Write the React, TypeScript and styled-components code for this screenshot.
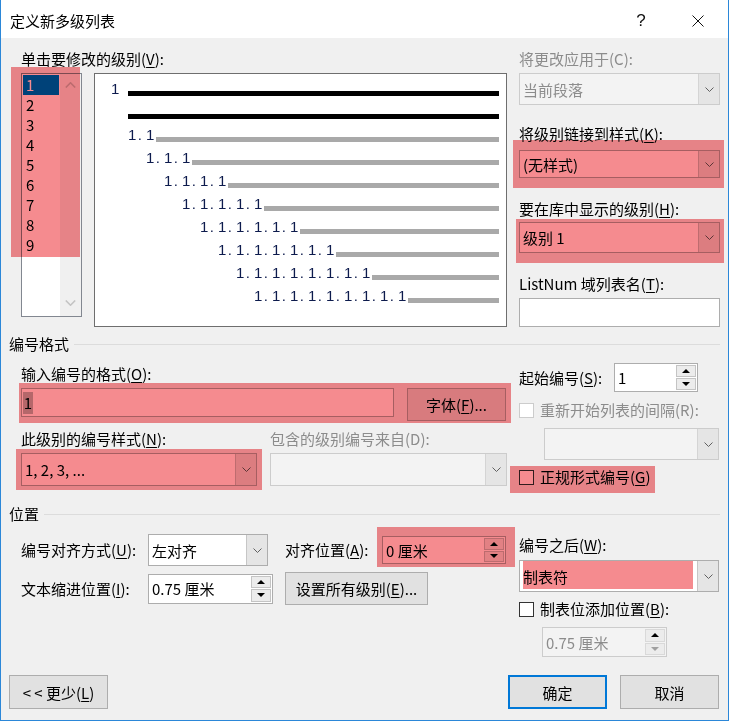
import styled, { createGlobalStyle } from 'styled-components';

const GlobalStyle = createGlobalStyle`
  html, body {
    margin: 0;
    padding: 0;
    background: #ffffff;
  }
  * {
    box-sizing: border-box;
  }
`;

const levels = [1, 2, 3, 4, 5, 6, 7, 8, 9];

// preview rows: first two are the bold level-1 lines, then one row per deeper level
const previewRows = [
  { indent: 16, depth: 1, thick: true, single: true },
  { indent: 33, depth: 0, thick: true, single: false },
  ...Array.from({ length: 8 }, (_, i) => ({
    indent: 33 + 18 * i,
    depth: i + 2,
    thick: false,
    single: false,
  })),
];

const Chevron = ({ color = '#606060' }: { color?: string }) => (
  <svg width="9" height="5" viewBox="0 0 9 5">
    <polyline points="0.5,0.5 4.5,4.5 8.5,0.5" fill="none" stroke={color} strokeWidth="1" />
  </svg>
);

const ScrollArrow = ({ up }: { up?: boolean }) => (
  <svg width="11" height="6" viewBox="0 0 11 6">
    <polyline
      points={up ? '0.8,5.5 5.5,0.8 10.2,5.5' : '0.8,0.5 5.5,5.2 10.2,0.5'}
      fill="none"
      stroke="#c4c4c4"
      strokeWidth="1.6"
    />
  </svg>
);

const Tri = ({ up, color = '#000000' }: { up?: boolean; color?: string }) => (
  <svg width="8" height="4" viewBox="0 0 8 4">
    <polygon points={up ? '0,4 8,4 4,0' : '0,0 8,0 4,4'} fill={color} />
  </svg>
);

const CloseIcon = () => (
  <svg width="12" height="12" viewBox="0 0 12 12">
    <path d="M0.5 0.5 L11.5 11.5 M11.5 0.5 L0.5 11.5" stroke="#111" strokeWidth="1" />
  </svg>
);

interface ComboProps {
  value?: string;
  width: number;
  height: number;
  disabled?: boolean;
}

const Combo = ({ value, width, height, disabled }: ComboProps) => (
  <S.Combo $w={width} $h={height} $disabled={disabled}>
    <S.FieldText $disabled={disabled}>{value}</S.FieldText>
    <S.DropBtn $disabled={disabled}>
      <Chevron />
    </S.DropBtn>
  </S.Combo>
);

const Spin = ({ value, width, height, disabled }: ComboProps) => (
  <S.Spin $w={width} $h={height} $disabled={disabled}>
    <S.FieldText $disabled={disabled}>{value}</S.FieldText>
    <S.SpinBtns>
      <S.SpinBtn $disabled={disabled}>
        <Tri up />
      </S.SpinBtn>
      <S.SpinBtn $disabled={disabled}>
        <Tri color={disabled ? '#a0a0a0' : '#000000'} />
      </S.SpinBtn>
    </S.SpinBtns>
  </S.Spin>
);

const Check = ({ label, disabled }: { label: React.ReactNode; disabled?: boolean }) => (
  <S.CheckRow>
    <S.Box $disabled={disabled} />
    <S.Text $disabled={disabled}>{label}</S.Text>
  </S.CheckRow>
);

const App = () => {
  return (
    <>
      <GlobalStyle />
      <S.Dialog>
        <S.TitleBar>
          <S.Title>定义新多级列表</S.Title>
          <S.TitleBtn>?</S.TitleBtn>
          <S.TitleBtn>
            <CloseIcon />
          </S.TitleBtn>
        </S.TitleBar>

        <S.Body>
          <S.Top>
            <S.LeftBlock>
              <S.Label>
                单击要修改的级别(<S.U>V</S.U>):
              </S.Label>
              <S.ListRow>
                <S.Highlight $t={-6} $l={-10} $r={2} $b={60}>
                  <S.ListBox>
                    <S.ListItems>
                      {levels.map((n) => (
                        <S.ListItem key={n} $selected={n === 1}>
                          {n}
                        </S.ListItem>
                      ))}
                    </S.ListItems>
                    <S.ScrollBar>
                      <ScrollArrow up />
                      <ScrollArrow />
                    </S.ScrollBar>
                  </S.ListBox>
                </S.Highlight>
                <S.Preview>
                  {previewRows.map((row, i) => (
                    <S.PRow key={i} $indent={row.indent}>
                      {row.single && <S.Seg $w={17}>1</S.Seg>}
                      {!row.single &&
                        row.depth > 0 &&
                        Array.from({ length: row.depth }, (_, j) =>
                          j < row.depth - 1 ? (
                            <S.Seg key={j} $w={18}>
                              1.
                            </S.Seg>
                          ) : (
                            <S.Seg key={j} $w={10}>
                              1
                            </S.Seg>
                          ),
                        )}
                      <S.PLine $thick={row.thick} />
                    </S.PRow>
                  ))}
                </S.Preview>
              </S.ListRow>
            </S.LeftBlock>

            <S.RightBlock>
              <S.Label $disabled>将更改应用于(C):</S.Label>
              <S.Field $mt={4}>
                <Combo value="当前段落" width={201} height={32} disabled />
              </S.Field>
              <S.Label $mt={19}>
                将级别链接到样式(<S.U>K</S.U>):
              </S.Label>
              <S.Field $mt={6}>
                <S.Highlight $t={-10} $l={-6} $r={-4} $b={-10}>
                  <Combo value="(无样式)" width={201} height={28} />
                </S.Highlight>
              </S.Field>
              <S.Label $mt={21}>
                要在库中显示的级别(<S.U>H</S.U>):
              </S.Label>
              <S.Field $mt={3}>
                <S.Highlight $t={-3} $l={-3} $r={-4} $b={-10}>
                  <Combo value="级别 1" width={201} height={31} />
                </S.Highlight>
              </S.Field>
              <S.Label $mt={21}>
                ListNum 域列表名(<S.U>T</S.U>):
              </S.Label>
              <S.Field $mt={4}>
                <S.TextInput $w={201} $h={29} />
              </S.Field>
            </S.RightBlock>
          </S.Top>

          <S.Section $mt={7}>
            <S.Text>编号格式</S.Text>
            <S.Rule />
          </S.Section>

          <S.Group>
            <S.GroupLeft>
              <S.Label $mt={10}>
                输入编号的格式(<S.U>O</S.U>):
              </S.Label>
              <S.Field $mt={4}>
                <S.Highlight $t={-5} $l={-2} $r={-5} $b={-2}>
                  <S.InputRow>
                    <S.TextInput $w={373} $h={29}>
                      <S.Sel>1</S.Sel>
                    </S.TextInput>
                    <S.Button $w={99} $h={33}>
                      字体(<S.U>F</S.U>)...
                    </S.Button>
                  </S.InputRow>
                </S.Highlight>
              </S.Field>
              <S.LabelRow>
                <S.Label $w={249}>
                  此级别的编号样式(<S.U>N</S.U>):
                </S.Label>
                <S.Label $disabled>包含的级别编号来自(D):</S.Label>
              </S.LabelRow>
              <S.ComboRow>
                <S.Highlight $t={-4} $l={-5} $r={-5} $b={-4}>
                  <Combo value="1, 2, 3, ..." width={236} height={33} />
                </S.Highlight>
                <Combo width={237} height={33} disabled />
              </S.ComboRow>
            </S.GroupLeft>

            <S.GroupRight>
              <S.StartRow>
                <S.Label $w={95}>
                  起始编号(<S.U>S</S.U>):
                </S.Label>
                <Spin value="1" width={84} height={29} />
              </S.StartRow>
              <S.Field $mt={8}>
                <Check label="重新开始列表的间隔(R):" disabled />
              </S.Field>
              <S.Field $mt={8} $ml={25}>
                <Combo width={175} height={32} disabled />
              </S.Field>
              <S.Field $mt={7}>
                <S.Highlight $t={-1} $l={-9} $w={145} $b={-6}>
                  <Check
                    label={
                      <>
                        正规形式编号(<S.U>G</S.U>)
                      </>
                    }
                  />
                </S.Highlight>
              </S.Field>
            </S.GroupRight>
          </S.Group>

          <S.Section $mt={17}>
            <S.Text>位置</S.Text>
            <S.Rule />
          </S.Section>

          <S.Group>
            <S.GroupLeft>
              <S.PosGrid>
                <S.Label>
                  编号对齐方式(<S.U>U</S.U>):
                </S.Label>
                <Combo value="左对齐" width={120} height={32} />
                <S.Label>
                  对齐位置(<S.U>A</S.U>):
                </S.Label>
                <S.Highlight $t={-9} $l={-5} $r={-9} $b={-3}>
                  <Spin value="0 厘米" width={124} height={28} />
                </S.Highlight>
                <S.Label>
                  文本缩进位置(<S.U>I</S.U>):
                </S.Label>
                <Spin value="0.75 厘米" width={125} height={30} />
                <S.SpanCell>
                  <S.Button $w={143} $h={33}>
                    设置所有级别(<S.U>E</S.U>)...
                  </S.Button>
                </S.SpanCell>
              </S.PosGrid>
            </S.GroupLeft>

            <S.GroupRight>
              <S.Label $mt={11}>
                编号之后(<S.U>W</S.U>):
              </S.Label>
              <S.Field $mt={5}>
                <S.Highlight $t={1} $l={4} $r={26} $b={3}>
                  <Combo value="制表符" width={200} height={32} />
                </S.Highlight>
              </S.Field>
              <S.Field $mt={7}>
                <Check
                  label={
                    <>
                      制表位添加位置(<S.U>B</S.U>):
                    </>
                  }
                />
              </S.Field>
              <S.Field $mt={8} $ml={23}>
                <Spin value="0.75 厘米" width={125} height={30} disabled />
              </S.Field>
            </S.GroupRight>
          </S.Group>

          <S.Footer>
            <S.Button $w={99} $h={34}>
              &lt; &lt; 更少(<S.U>L</S.U>)
            </S.Button>
            <S.FooterRight>
              <S.Button $w={99} $h={34} $primary>
                确定
              </S.Button>
              <S.Button $w={99} $h={34}>
                取消
              </S.Button>
            </S.FooterRight>
          </S.Footer>
        </S.Body>
      </S.Dialog>
    </>
  );
};

const FONT = `"Noto Sans CJK SC", "Liberation Sans", sans-serif`;
const GRAY_TEXT = '#8c8c8c';

const S = {
  Dialog: styled.div`
    width: 729px;
    height: 721px;
    display: flex;
    flex-direction: column;
    border: 1px solid #2b87d8;
    border-top: none;
    background: #f0f0f0;
    font-family: ${FONT};
    font-size: 15px;
    color: #000000;
  `,
  TitleBar: styled.div`
    height: 38px;
    padding: 4px 7px 0 9px;
    display: flex;
    align-items: center;
    background: #ffffff;
  `,
  Title: styled.div`
    flex: 1;
    line-height: 20px;
  `,
  TitleBtn: styled.div`
    width: 46px;
    height: 30px;
    margin-left: 11px;
    display: flex;
    align-items: center;
    justify-content: center;
    font-family: 'Liberation Sans', sans-serif;
    font-size: 17px;
    color: #111;
  `,
  Body: styled.div`
    flex: 1;
    display: flex;
    flex-direction: column;
    padding: 11px 8px 11px 8px;
  `,
  Top: styled.div`
    display: flex;
    gap: 12px;
    padding-left: 12px;
  `,
  LeftBlock: styled.div`
    width: 486px;
    display: flex;
    flex-direction: column;
  `,
  RightBlock: styled.div`
    width: 201px;
    display: flex;
    flex-direction: column;
  `,
  Label: styled.div<{ $disabled?: boolean; $mt?: number; $w?: number }>`
    height: 20px;
    line-height: 20px;
    white-space: nowrap;
    margin-top: ${(p) => p.$mt ?? 0}px;
    ${(p) => (p.$w ? `width: ${p.$w}px; flex: none;` : '')}
    color: ${(p) => (p.$disabled ? GRAY_TEXT : '#000000')};
  `,
  Text: styled.span<{ $disabled?: boolean }>`
    line-height: 20px;
    white-space: nowrap;
    color: ${(p) => (p.$disabled ? GRAY_TEXT : '#000000')};
  `,
  U: styled.span`
    text-decoration: underline;
    text-underline-offset: 2px;
    text-decoration-thickness: 1px;
  `,
  Field: styled.div<{ $mt?: number; $ml?: number }>`
    display: flex;
    margin-top: ${(p) => p.$mt ?? 0}px;
    margin-left: ${(p) => p.$ml ?? 0}px;
  `,
  Highlight: styled.div<{ $t: number; $l: number; $r?: number; $b: number; $w?: number }>`
    position: relative;
    display: flex;
    width: fit-content;
    &::after {
      content: '';
      position: absolute;
      top: ${(p) => p.$t}px;
      left: ${(p) => p.$l}px;
      bottom: ${(p) => p.$b}px;
      ${(p) => (p.$w !== undefined ? `width: ${p.$w}px;` : `right: ${p.$r ?? 0}px;`)}
      background: #f58b8f;
      mix-blend-mode: multiply;
      pointer-events: none;
    }
  `,
  ListRow: styled.div`
    display: flex;
    align-items: flex-start;
    gap: 12px;
    margin-top: 4px;
  `,
  ListBox: styled.div`
    width: 61px;
    height: 244px;
    display: flex;
    border: 1px solid #828790;
    background: #ffffff;
  `,
  ListItems: styled.div`
    flex: 1;
    padding: 1px 1px 0 1px;
  `,
  ListItem: styled.div<{ $selected?: boolean }>`
    height: 20px;
    line-height: 20px;
    padding-left: 3px;
    background: ${(p) => (p.$selected ? '#0078d7' : 'transparent')};
    color: ${(p) => (p.$selected ? '#ffffff' : '#000000')};
  `,
  ScrollBar: styled.div`
    width: 21px;
    display: flex;
    flex-direction: column;
    align-items: center;
    justify-content: space-between;
    padding: 8px 0 10px;
    background: #f0f0f0;
  `,
  Preview: styled.div`
    width: 413px;
    height: 254px;
    display: flex;
    flex-direction: column;
    border: 1px solid #6e6e6e;
    background: #ffffff;
  `,
  PRow: styled.div<{ $indent: number }>`
    height: 23px;
    flex: none;
    display: flex;
    align-items: flex-end;
    padding-left: ${(p) => p.$indent}px;
    padding-right: 7px;
  `,
  Seg: styled.span<{ $w: number }>`
    width: ${(p) => p.$w}px;
    flex: none;
    margin-bottom: 1px;
    font-family: 'Liberation Sans', sans-serif;
    font-size: 15px;
    line-height: 15px;
    letter-spacing: 1.5px;
    color: #0d1b4d;
    white-space: pre;
  `,
  PLine: styled.div<{ $thick?: boolean }>`
    flex: 1;
    height: 5px;
    margin-bottom: 1px;
    background: ${(p) => (p.$thick ? '#000000' : '#a9a9a9')};
  `,
  Combo: styled.div<{ $w: number; $h: number; $disabled?: boolean }>`
    width: ${(p) => p.$w}px;
    height: ${(p) => p.$h}px;
    display: flex;
    border: 1px solid ${(p) => (p.$disabled ? '#cccccc' : '#adadad')};
    background: ${(p) => (p.$disabled ? '#f3f3f3' : '#ffffff')};
  `,
  FieldText: styled.div<{ $disabled?: boolean }>`
    flex: 1;
    display: flex;
    align-items: center;
    padding-left: 3px;
    white-space: nowrap;
    overflow: hidden;
    color: ${(p) => (p.$disabled ? GRAY_TEXT : '#000000')};
  `,
  DropBtn: styled.div<{ $disabled?: boolean }>`
    width: 21px;
    display: flex;
    align-items: center;
    justify-content: center;
    border-left: 1px solid ${(p) => (p.$disabled ? '#d4d4d4' : '#c6c6c6')};
    background: #e5e5e5;
  `,
  Spin: styled.div<{ $w: number; $h: number; $disabled?: boolean }>`
    width: ${(p) => p.$w}px;
    height: ${(p) => p.$h}px;
    display: flex;
    border: 1px solid ${(p) => (p.$disabled ? '#cccccc' : '#adadad')};
    background: ${(p) => (p.$disabled ? '#f3f3f3' : '#ffffff')};
  `,
  SpinBtns: styled.div`
    width: 21px;
    display: flex;
    flex-direction: column;
    gap: 1px;
    padding: 1px 1px 1px 0;
  `,
  SpinBtn: styled.div<{ $disabled?: boolean }>`
    flex: 1;
    display: flex;
    align-items: center;
    justify-content: center;
    border: 1px solid ${(p) => (p.$disabled ? '#d9d9d9' : '#c4c4c4')};
    background: #ececec;
  `,
  TextInput: styled.div<{ $w: number; $h: number }>`
    width: ${(p) => p.$w}px;
    height: ${(p) => p.$h}px;
    display: flex;
    align-items: center;
    padding-left: 1px;
    border: 1px solid #adadad;
    background: #ffffff;
  `,
  Sel: styled.span`
    width: 10px;
    height: 22px;
    line-height: 22px;
    text-align: center;
    background: #bdbdbd;
  `,
  Button: styled.div<{ $w: number; $h: number; $primary?: boolean }>`
    width: ${(p) => p.$w}px;
    height: ${(p) => p.$h}px;
    flex: none;
    display: flex;
    align-items: center;
    justify-content: center;
    white-space: nowrap;
    background: #e1e1e1;
    border: ${(p) => (p.$primary ? '2px solid #0078d7' : '1px solid #adadad')};
  `,
  InputRow: styled.div`
    display: flex;
    align-items: flex-start;
    gap: 13px;
  `,
  Section: styled.div<{ $mt: number }>`
    display: flex;
    align-items: center;
    height: 20px;
    margin-top: ${(p) => p.$mt}px;
  `,
  Rule: styled.div`
    flex: 1;
    height: 1px;
    margin-left: 5px;
    background: #dcdcdc;
  `,
  Group: styled.div`
    display: flex;
    gap: 8px;
    padding-left: 12px;
  `,
  GroupLeft: styled.div`
    width: 490px;
    display: flex;
    flex-direction: column;
  `,
  GroupRight: styled.div`
    width: 201px;
    display: flex;
    flex-direction: column;
  `,
  LabelRow: styled.div`
    display: flex;
    margin-top: 8px;
  `,
  ComboRow: styled.div`
    display: flex;
    gap: 13px;
    margin-top: 4px;
  `,
  StartRow: styled.div`
    display: flex;
    align-items: center;
    margin-top: 9px;
  `,
  CheckRow: styled.div`
    display: flex;
    align-items: center;
    gap: 6px;
    height: 20px;
  `,
  Box: styled.div<{ $disabled?: boolean }>`
    width: 15px;
    height: 15px;
    border: 1px solid ${(p) => (p.$disabled ? '#cccccc' : '#333333')};
    background: #ffffff;
  `,
  PosGrid: styled.div`
    display: grid;
    grid-template-columns: 127px 137px 97px 124px;
    grid-auto-rows: auto;
    row-gap: 6px;
    align-items: center;
    justify-items: start;
    margin-top: 10px;
  `,
  SpanCell: styled.div`
    grid-column: span 2;
  `,
  Footer: styled.div`
    margin-top: auto;
    display: flex;
    justify-content: space-between;
    padding-right: 1px;
  `,
  FooterRight: styled.div`
    display: flex;
    gap: 13px;
  `,
};

export default App;
